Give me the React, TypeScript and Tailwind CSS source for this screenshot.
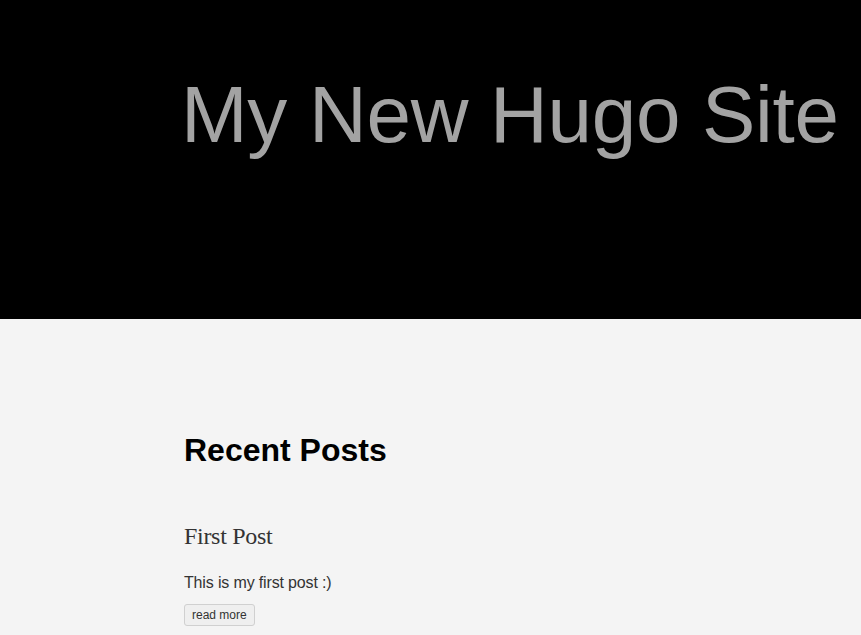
import React from 'react';

export default function App() {
  return (
    <div className="min-h-[635px] bg-[#f4f4f4] font-['Liberation_Sans',Arial,sans-serif]">
      <header className="h-[319px] bg-black pl-[181px] pt-[75px] overflow-hidden">
        <h1 className="text-[80px] leading-[80px] font-normal tracking-[-0.3px] text-[#a3a3a3] whitespace-nowrap">My New Hugo Site</h1>
      </header>
      <main className="pl-[184px] pt-[115px]">
        <h2 className="text-[32px] leading-[32px] font-bold text-black">Recent Posts</h2>
        <article className="mt-[58px]">
          <h3 className="font-['Liberation_Serif','Times_New_Roman',serif] text-[24px] leading-[24px] tracking-[-0.3px] text-[#333]">First Post</h3>
          <p className="mt-[27px] text-[16px] leading-[16px] tracking-[-0.15px] text-[#333]">This is my first post :)</p>
          <button className="mt-[13px] h-[22px] px-[7px] text-[12px] leading-[12px] text-[#333] bg-[#efefef] border border-[#d0d0d0] rounded-[3px]">
            read more
          </button>
        </article>
      </main>
    </div>
  );
}
